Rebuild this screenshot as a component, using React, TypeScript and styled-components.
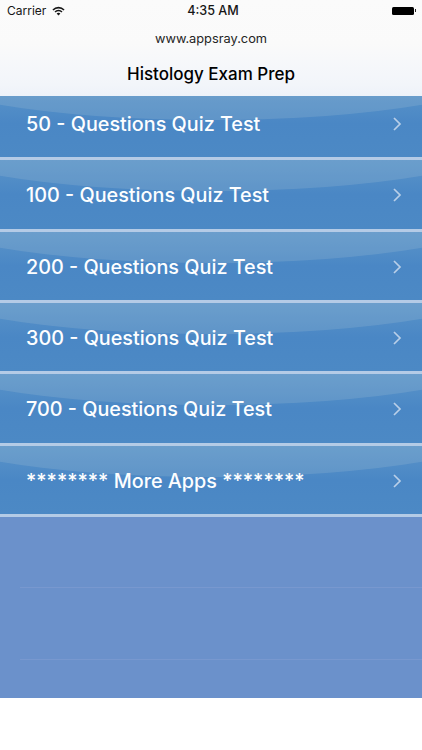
import React from "react";
import styled, { createGlobalStyle } from "styled-components";

const Global = createGlobalStyle`
  html, body { margin: 0; padding: 0; background: #fff; }
  body { font-family: Inter, "Liberation Sans", sans-serif; -webkit-font-smoothing: antialiased; }
`;

const Page = styled.div`
  width: 422px;
  height: 750px;
  overflow: hidden;
  display: flex;
  flex-direction: column;
  background: #fff;
`;

const Header = styled.header`
  position: relative;
  z-index: 1;
  height: 96px;
  flex: none;
  display: flex;
  flex-direction: column;
  background: linear-gradient(#fbfbfb 0%, #fafafa 45%, #f2f5fa 88%, #edf2f9 100%);
`;

const StatusBar = styled.div`
  height: 21px;
  padding: 0 6px 0 7px;
  display: grid;
  grid-template-columns: 1fr auto 1fr;
  align-items: center;
  font-size: 12px;
  color: #161616;
`;

const StatusLeft = styled.div`
  display: flex;
  align-items: center;
  gap: 6px;
`;

const StatusTime = styled.div`
  font-weight: 500;
  font-size: 12.6px;
  margin-left: 3px;
`;

const StatusRight = styled.div`
  display: flex;
  justify-content: flex-end;
  align-items: center;
`;

const Battery = styled.div`
  width: 22px;
  height: 8px;
  background: #000;
  border-radius: 1.5px;
  margin-right: 2px;
  position: relative;
  &::after {
    content: "";
    position: absolute;
    right: -2px;
    top: 2.5px;
    width: 1.5px;
    height: 3px;
    background: #222;
  }
`;

const Website = styled.div`
  margin-top: 10px;
  text-align: center;
  font-size: 12.8px;
  line-height: 16px;
  color: #242424;
`;

const Title = styled.h1`
  margin: 17px 0 0;
  text-align: center;
  font-size: 17px;
  line-height: 20px;
  font-weight: 500;
  color: #000;
`;

const List = styled.div`
  height: 609px;
  margin-top: -7px;
  flex: none;
  display: grid;
  grid-auto-rows: 71.33px;
  background: #6b91cb;
  overflow: hidden;
`;

const Row = styled.div`
  position: relative;
  overflow: hidden;
  display: flex;
  align-items: center;
  justify-content: space-between;
  padding: 0 20px 0 26px;
  box-sizing: border-box;
  background: linear-gradient(#5a94c9 0%, #4a87c5 50%, #4c89c5 100%);
  border-bottom: 3px solid #b4cbe6;
  &::before {
    content: "";
    position: absolute;
    left: -90px;
    right: -90px;
    top: -75px;
    height: 106px;
    border-radius: 50%;
    background: rgba(170, 195, 215, 0.22);
  }
  &::after {
    content: "";
    position: absolute;
    left: 0;
    bottom: -3px;
    width: 20px;
    height: 3px;
    background: #d5e1f1;
  }
`;

const Label = styled.span`
  position: relative;
  top: 1px;
  font-size: 19.8px;
  line-height: 26px;
  font-weight: 500;
  color: #fdfeff;
  white-space: pre;
`;

const Chevron = styled.svg`
  position: relative;
  top: 1px;
  width: 10px;
  height: 16px;
  flex: none;
`;

const EmptyRow = styled.div<{ $line: boolean }>`
  margin-left: 20px;
  border-bottom: ${(p) => (p.$line ? "1px solid #7898cf" : "none")};
  box-sizing: border-box;
`;

const items = [
  "50 - Questions Quiz Test",
  "100 - Questions Quiz Test",
  "200 - Questions Quiz Test",
  "300 - Questions Quiz Test",
  "700 - Questions Quiz Test",
  "******** More Apps ********",
];

export default function App() {
  return (
    <Page>
      <Global />
      <Header>
        <StatusBar>
          <StatusLeft>
            <span>Carrier</span>
            <svg width="13" height="10" viewBox="0 0 13 10" aria-hidden="true">
              <path d="M0.4 3.4A8.6 8.6 0 0 1 12.6 3.4L11.5 4.6A7 7 0 0 0 1.5 4.6Z" fill="#161616" />
              <path d="M2.5 5.5A5.6 5.6 0 0 1 10.5 5.5L9.4 6.6A4 4 0 0 0 3.6 6.6Z" fill="#161616" />
              <path d="M4.6 7.6A2.7 2.7 0 0 1 8.4 7.6L6.5 9.6Z" fill="#161616" />
            </svg>
          </StatusLeft>
          <StatusTime>4:35 AM</StatusTime>
          <StatusRight>
            <Battery />
          </StatusRight>
        </StatusBar>
        <Website>www.appsray.com</Website>
        <Title>Histology Exam Prep</Title>
      </Header>
      <List>
        {items.map((t) => (
          <Row key={t}>
            <Label>{t}</Label>
            <Chevron viewBox="0 0 10 16" aria-hidden="true">
              <path d="M2 2L8 8L2 14" fill="none" stroke="#b9cfe8" strokeWidth="1.7" />
            </Chevron>
          </Row>
        ))}
        <EmptyRow $line />
        <EmptyRow $line />
        <EmptyRow $line={false} />
      </List>
    </Page>
  );
}
